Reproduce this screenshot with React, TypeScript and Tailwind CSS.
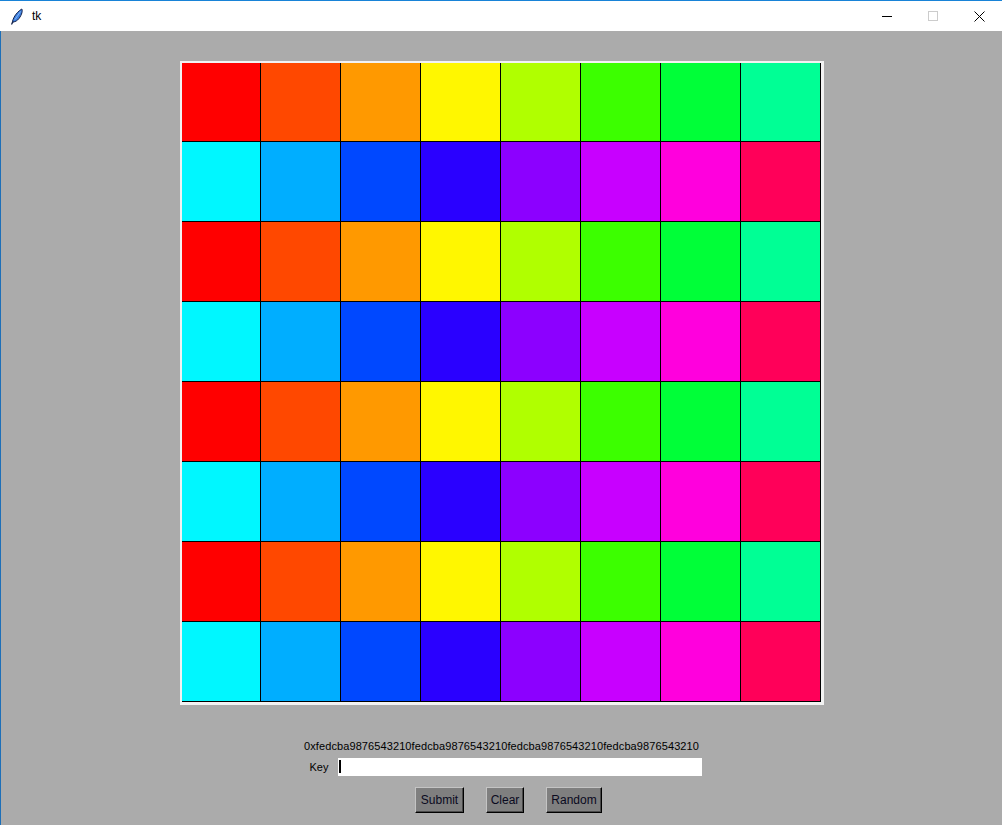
import React from "react";

const rowA = [
  "bg-[#ff0000]",
  "bg-[#ff4800]",
  "bg-[#ff9900]",
  "bg-[#fff700]",
  "bg-[#b0ff00]",
  "bg-[#3cff00]",
  "bg-[#00ff38]",
  "bg-[#00ff95]",
];
const rowB = [
  "bg-[#00f7ff]",
  "bg-[#00aeff]",
  "bg-[#0048ff]",
  "bg-[#2a00ff]",
  "bg-[#8c00ff]",
  "bg-[#c800ff]",
  "bg-[#ff00dd]",
  "bg-[#ff0059]",
];

const cells: string[] = [];
for (let r = 0; r < 8; r++) {
  const row = r % 2 === 0 ? rowA : rowB;
  for (let c = 0; c < 8; c++) cells.push(row[c]);
}

function Feather() {
  return (
    <svg width="14" height="17" viewBox="0 0 14 17" className="block">
      <path
        d="M2.2 15.2 C2.6 11 5.5 5 11.8 1 C12.8 2.5 12 6.5 9 10.5 C7.2 12.8 5.2 13.8 3.4 13.9 Z"
        fill="#3b7fe0"
        stroke="#14224a"
        strokeWidth="1"
        strokeLinejoin="round"
      />
      <path d="M5 11.5 L10.5 3.5" stroke="#9cc4f5" strokeWidth="0.8" fill="none" />
      <path d="M1.5 16.5 L3.2 13.2" stroke="#14224a" strokeWidth="1.2" fill="none" />
    </svg>
  );
}

function TkButton({ label, w }: { label: string; w: string }) {
  return (
    <div
      className={`${w} h-[26px] flex items-center justify-center bg-[#7f7f7f] border border-t-[#c4c4c4] border-l-[#c4c4c4] border-r-black border-b-black shadow-[inset_-1px_-1px_0_#4a4a4a] text-[12px] text-[#0a0a1e]`}
    >
      {label}
    </div>
  );
}

export default function App() {
  return (
    <div className="w-[1002px] h-[825px] overflow-hidden flex flex-col font-['Liberation_Sans',Arial,sans-serif] bg-[#ababab]">
      {/* title bar */}
      <div className="h-[31px] bg-white border-t border-[#1883d7] flex items-stretch shrink-0">
        <div className="pl-[10px] pr-[6px] flex items-center">
          <Feather />
        </div>
        <div className="flex items-center text-[12px] text-black pl-[2px] pb-[1px]">tk</div>
        <div className="ml-auto flex">
          <div className="w-[46px] flex items-center justify-center">
            <div className="w-[10px] h-px bg-black" />
          </div>
          <div className="w-[46px] flex items-center justify-center">
            <div className="w-[10px] h-[10px] border border-[#cccccc]" />
          </div>
          <div className="w-[46px] flex items-center justify-center">
            <svg width="11" height="11" viewBox="0 0 11 11" className="block">
              <path d="M0.5 0.5 L10.5 10.5 M10.5 0.5 L0.5 10.5" stroke="#000" strokeWidth="1" fill="none" />
            </svg>
          </div>
        </div>
      </div>

      {/* body */}
      <div className="flex-1 flex flex-col border-l border-[#1d6fb8]">
        <div className="mt-[30px] ml-[179px] w-[644px] h-[644px] bg-[#f2f2f2] pt-[2px] pl-[2px]">
          <div className="grid grid-cols-[78px_repeat(7,79px)] grid-rows-[78px_repeat(7,79px)] gap-px bg-black pr-px pb-px w-[639px] h-[639px]">
            {cells.map((c, i) => (
              <div key={i} className={c} />
            ))}
          </div>
        </div>

        <div className="mt-[34px] h-[14px] leading-[14px] text-[11px] text-black text-center tracking-[0.1px]">
          0xfedcba9876543210fedcba9876543210fedcba9876543210fedcba9876543210
        </div>

        <div className="mt-[5px] ml-[299px] flex h-[18px]">
          <div className="w-[38px] flex items-center justify-center text-[11px] text-black leading-[18px]">Key</div>
          <div className="w-[364px] h-[18px] bg-white flex">
            <div className="w-[2px] h-[13px] bg-black ml-px mt-[2px]" />
          </div>
        </div>

        <div className="mt-[11px] ml-[414px] flex gap-[22px]">
          <TkButton label="Submit" w="w-[49px]" />
          <TkButton label="Clear" w="w-[38px]" />
          <TkButton label="Random" w="w-[56px]" />
        </div>
      </div>
    </div>
  );
}
